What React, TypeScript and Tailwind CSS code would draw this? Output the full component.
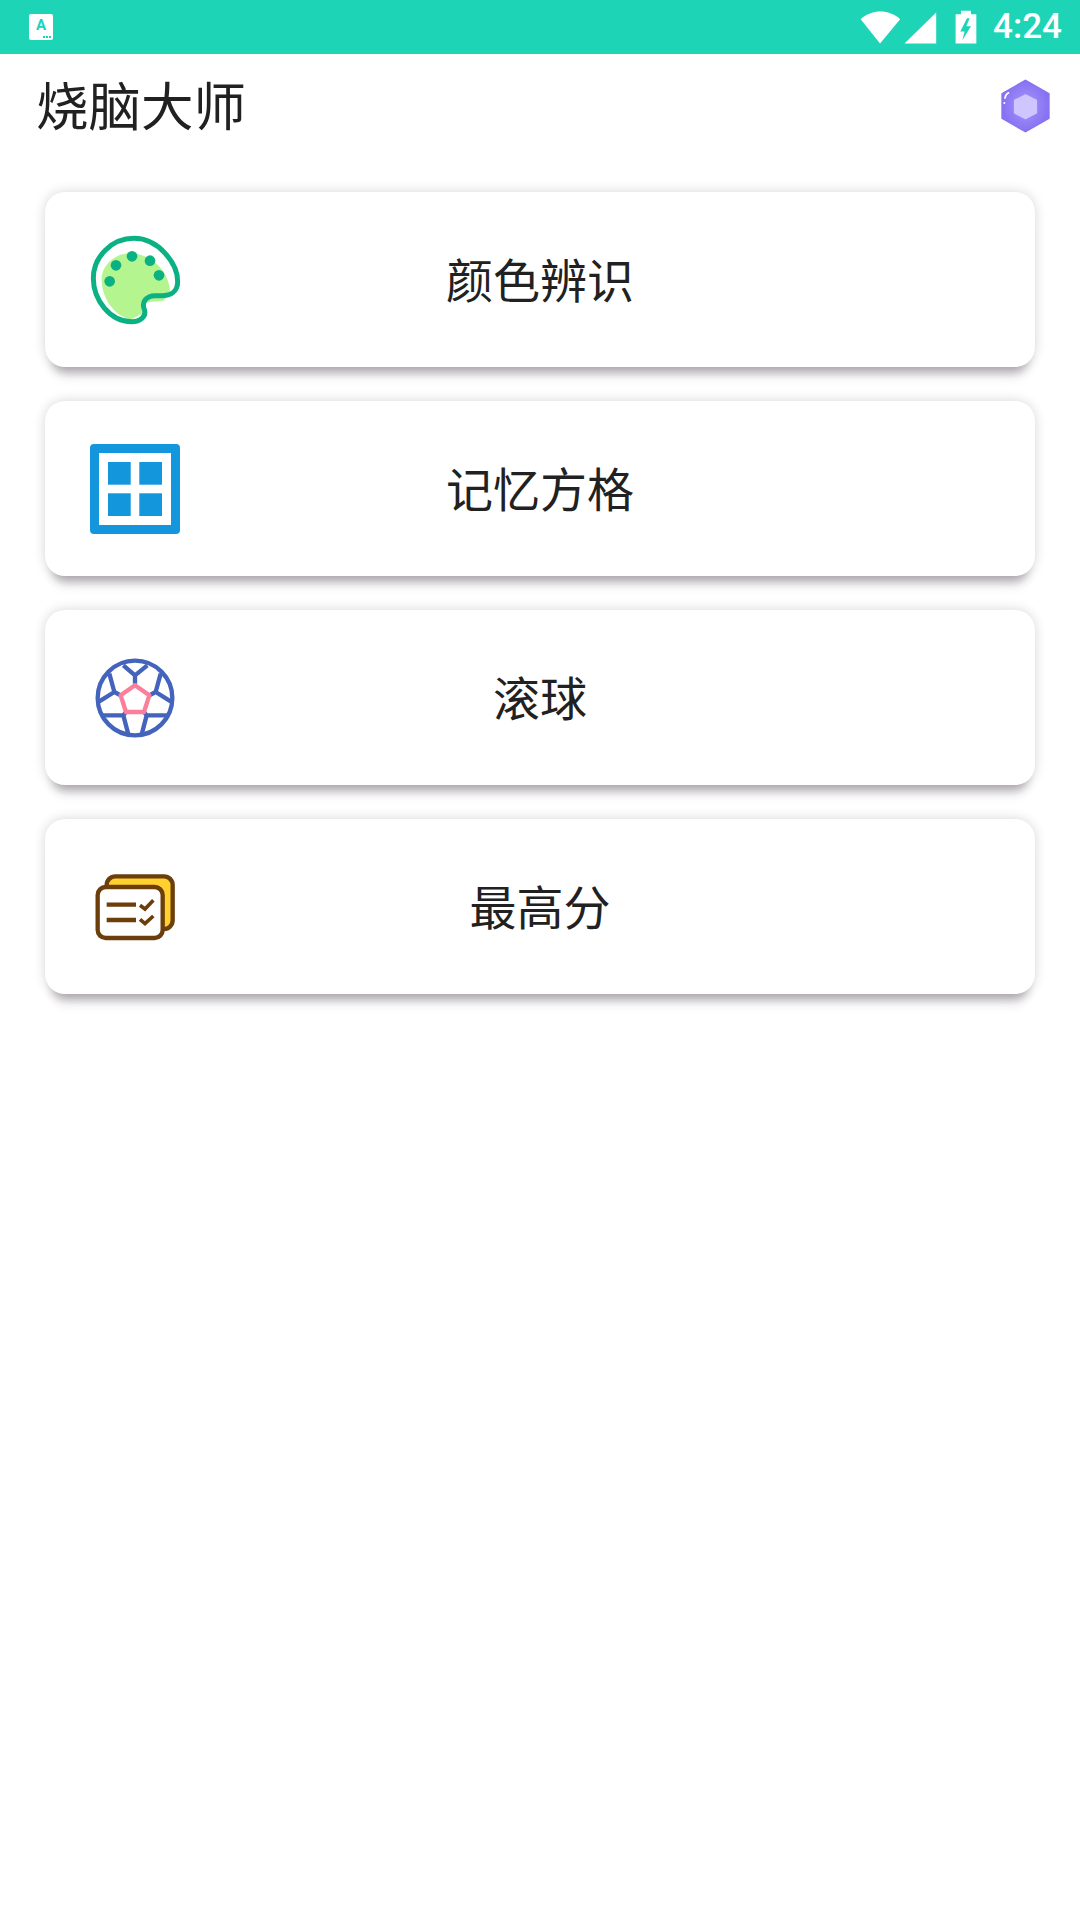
const cjk = "font-['Noto_Sans_CJK_SC','Noto_Sans',sans-serif]"

const StatusIcons = () => (
  <svg viewBox="60 25 350 110" className="w-[117px] h-[37px]">
    <path d="M120 128 L62 55 C96 25 146 25 180 55 Z" fill="#fff" />
    <path d="M288 35 L288 128 L193 128 Z" fill="#fff" />
    <path d="M362 40 L362 30 L392 30 L392 40 L408 40 L408 128 L346 128 L346 40 Z" fill="#fff" />
    <path d="M380 52 L360 92 L373 92 L366 118 L392 76 L378 76 L388 52 Z" fill="#1dd4b7" />
  </svg>
)

const Gem = () => (
  <svg viewBox="480 234 154 168" className="w-[51px] h-[56px]">
    <defs>
      <radialGradient id="gem">
        <stop offset="0%" stopColor="#a897fb" />
        <stop offset="100%" stopColor="#8672f2" />
      </radialGradient>
    </defs>
    <path d="M557 241 L627 281 L627 355 L557 395 L487 355 L487 281 Z" fill="url(#gem)" stroke="url(#gem)" strokeWidth="6" strokeLinejoin="round" />
    <path d="M557 284 L590 301 L590 339 L557 356 L524 339 L524 301 Z" fill="#cfc5ff" stroke="#cfc5ff" strokeWidth="4" strokeLinejoin="round" />
    <path d="M506 278 C498 282 496 288 495 294" fill="none" stroke="#fff" strokeWidth="5" strokeLinecap="round" />
    <circle cx="493" cy="309" r="3" fill="#fff" />
  </svg>
)

const Palette = () => (
  <svg viewBox="180 162 276 276" className="w-[92px] h-[92px]">
    <path d="M300 220 C360 220 418 270 420 335 L400 362 L360 366 L336 372 L338 400 L305 418 C250 410 215 350 215 300 C215 255 255 220 300 220 Z" fill="#b5f58f" />
    <path d="M312 175 C385 175 443 250 443 305 C443 335 420 347 395 347 L375 347 C350 347 335 365 342 385 C352 410 330 425 305 425 C240 425 190 360 190 295 C190 230 245 175 312 175 Z" fill="none" stroke="#0bb183" strokeWidth="15" />
    <circle cx="258" cy="256" r="16" fill="#0bb183" />
    <circle cx="306" cy="229" r="16" fill="#0bb183" />
    <circle cx="360" cy="242" r="16" fill="#0bb183" />
    <circle cx="387" cy="286" r="16" fill="#0bb183" />
    <circle cx="239" cy="304" r="16" fill="#0bb183" />
  </svg>
)

const GridIcon = () => (
  <svg viewBox="0 0 90 90" className="w-[90px] h-[90px]">
    <rect width="90" height="90" rx="4" fill="#1496dc" />
    <rect x="9" y="9" width="72" height="72" fill="#fff" />
    <rect x="18" y="18" width="22.7" height="22.7" fill="#1496dc" />
    <rect x="49.3" y="18" width="22.7" height="22.7" fill="#1496dc" />
    <rect x="18" y="49.3" width="22.7" height="22.7" fill="#1496dc" />
    <rect x="49.3" y="49.3" width="22.7" height="22.7" fill="#1496dc" />
  </svg>
)

const Ball = () => (
  <svg viewBox="60 68 270 270" className="w-[90px] h-[90px]">
    <g fill="none" stroke="#4463bd" strokeWidth="13" strokeLinejoin="round">
      <circle cx="195" cy="203" r="112" />
      <path d="M160 105 L195 135 L232 105 M195 135 L195 160" />
      <path d="M118 130 L133 185 L152 195 M133 185 L88 213" />
      <path d="M272 130 L257 185 L238 195 M257 185 L302 213" />
      <path d="M92 255 L160 255 L168 245 M160 255 L175 312" />
      <path d="M298 255 L230 255 L222 245 M230 255 L215 312" />
    </g>
    <path d="M195 165 L238 195 L222 245 L168 245 L152 195 Z" fill="#fff" stroke="#fb7f9b" strokeWidth="13" strokeLinejoin="round" />
  </svg>
)

const ScoreIcon = () => (
  <svg viewBox="60 35 270 270" className="w-[90px] h-[90px]">
    <rect x="110" y="78" width="198" height="158" rx="26" fill="#ffd02e" stroke="#6b3e0c" strokeWidth="13" />
    <rect x="83" y="110" width="195" height="153" rx="24" fill="#fff" stroke="#6b3e0c" strokeWidth="13" />
    <path d="M110 163 L198 163 M110 209 L198 209" stroke="#6b3e0c" strokeWidth="13" />
    <path d="M210 165 L225 176 L250 150 M210 207 L225 220 L250 197" fill="none" stroke="#6b3e0c" strokeWidth="11" />
  </svg>
)

const items = [
  { title: "颜色辨识", icon: <Palette /> },
  { title: "记忆方格", icon: <GridIcon /> },
  { title: "滚球", icon: <Ball /> },
  { title: "最高分", icon: <ScoreIcon /> },
]

export default function App() {
  return (
    <div className={`w-[1080px] min-h-[1920px] bg-white text-[#212121] ${cjk}`}>
      <div className="h-[54px] bg-[#1dd4b7] flex items-center justify-between pl-[29px] pr-[18px]">
        <div className="relative w-[24px] h-[26px] bg-white rounded-[2px] text-center text-[#1dd4b7] text-[15px] leading-[22px] font-bold font-['Roboto',sans-serif]">
          A
          <div className="absolute right-[2px] bottom-[2px] flex gap-[1px]">
            <span className="w-[2px] h-[2px] bg-[#1dd4b7]" />
            <span className="w-[2px] h-[2px] bg-[#1dd4b7]" />
            <span className="w-[2px] h-[2px] bg-[#1dd4b7]" />
          </div>
        </div>
        <div className="flex items-center gap-[16px]">
          <StatusIcons />
          <span className="text-white text-[35px] font-medium font-['Roboto',sans-serif]">4:24</span>
        </div>
      </div>

      <div className="h-[104px] flex items-center justify-between pl-[36px] pr-[29px]">
        <span className="text-[52.5px] pb-[5px]">烧脑大师</span>
        <Gem />
      </div>

      <div className="flex flex-col gap-[34px] px-[45px] pt-[34px]">
        {items.map((item) => (
          <div
            key={item.title}
            className="h-[175px] rounded-[20px] bg-white grid grid-cols-[1fr_auto_1fr] items-center shadow-[0_0_12px_rgba(60,50,60,0.2),0_14px_8px_-8px_rgba(60,50,60,0.28),0_18px_14px_-10px_rgba(60,50,60,0.1)]"
          >
            <div className="pl-[45px]">{item.icon}</div>
            <span className="text-[47px] pb-[3px]">{item.title}</span>
            <div />
          </div>
        ))}
      </div>
    </div>
  )
}
